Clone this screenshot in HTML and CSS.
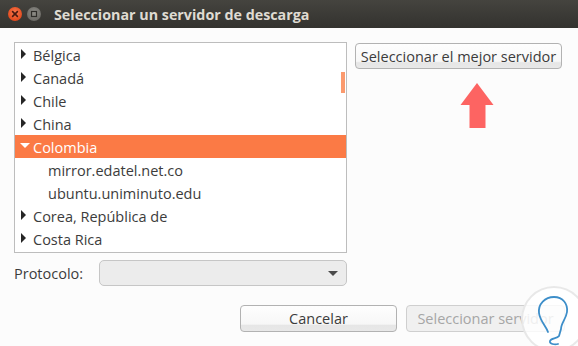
FILE: index.html
```html
<!DOCTYPE html>
<html>
<head>
<meta charset="utf-8">
<link rel="stylesheet" href="styles.css">
</head>
<body>
<div class="window">
  <div class="titlebar">
    <span class="wbtn close"><svg width="14" height="14" viewBox="0 0 14 14"><path d="M4.6 4.6L9.4 9.4M9.4 4.6L4.6 9.4" stroke="#4a1a10" stroke-width="1.6" stroke-linecap="round"/></svg></span>
    <span class="wbtn max"><svg width="14" height="14" viewBox="0 0 14 14"><rect x="4.5" y="4.5" width="5" height="5" fill="none" stroke="#2e2d29" stroke-width="1.2"/></svg></span>
    <span class="title">Seleccionar un servidor de descarga</span>
  </div>
  <div class="content">
    <div class="top-row">
      <div class="tree">
        <div class="row"><span class="exp right"></span>Bélgica</div>
        <div class="row"><span class="exp right"></span>Canadá</div>
        <div class="row"><span class="exp right"></span>Chile</div>
        <div class="row"><span class="exp right"></span>China</div>
        <div class="row selected"><span class="exp down"></span>Colombia</div>
        <div class="row child">mirror.edatel.net.co</div>
        <div class="row child">ubuntu.uniminuto.edu</div>
        <div class="row"><span class="exp right"></span>Corea, República de</div>
        <div class="row"><span class="exp right"></span>Costa Rica</div>
        <div class="scrollbar"></div>
      </div>
      <div class="side">
        <button class="btn best">Seleccionar el mejor servidor</button>
        <svg class="arrow" width="34" height="46" viewBox="0 0 34 46"><path d="M17 0L33.5 22H25.5V45H9.5V22H0.5Z" fill="#fd6462"/></svg>
      </div>
    </div>
    <div class="proto-row">
      <span class="label">Protocolo:</span>
      <div class="combo"><span class="caret"></span></div>
    </div>
    <div class="actions">
      <button class="btn cancel">Cancelar</button>
      <button class="btn disabled">Seleccionar servidor</button>
    </div>
  </div>
  <div class="watermark">
    <svg width="66" height="66" viewBox="0 0 66 66"><path d="M27 46C25 40 19 35 18 27C17 18 24 11 33 11C42 11 47 18 46 26C45 33 40 37 40 43L38 50C36 53 30 52 29 55C28 58 34 59 37 58" fill="none" stroke="#3d8ec9" stroke-width="1.8" stroke-linecap="round" stroke-linejoin="round"/></svg>
  </div>
</div>
</body>
</html>
```
FILE: styles.css
```css
html, body {
  margin: 0;
  padding: 0;
}
body {
  width: 578px;
  height: 346px;
  overflow: hidden;
  font-family: "Open Sans", "Noto Sans", sans-serif;
  font-size: 14.5px;
  color: #3c3c3c;
}
.window {
  position: relative;
  width: 578px;
  height: 346px;
  background: #fcfcfc;
}
.titlebar {
  height: 28px;
  background: linear-gradient(#45443f, #3a3935 60%, #34332f);
  display: flex;
  align-items: center;
  padding-left: 8px;
  gap: 5px;
  box-sizing: border-box;
}
.wbtn {
  width: 14px;
  height: 14px;
  border-radius: 50%;
  display: flex;
}
.close {
  background: radial-gradient(circle at 50% 40%, #f8794e, #e44b1e 70%, #c93c14);
}
.max {
  background: radial-gradient(circle at 50% 40%, #8f8e88, #6d6c67 70%, #5a5955);
}
.title {
  margin-left: 8px;
  color: #dfdbd2;
  font-weight: bold;
  font-size: 14.3px;
}
.content {
  padding: 14px 13px 0 14px;
}
.top-row {
  display: flex;
  align-items: flex-start;
  gap: 8px;
}
.tree {
  position: relative;
  width: 333px;
  height: 211px;
  box-sizing: border-box;
  border: 1px solid #bdbdbd;
  background: #ffffff;
}
.row {
  height: 23px;
  line-height: 23px;
  display: flex;
  align-items: center;
  padding-left: 6px;
  padding-top: 1px;
  box-sizing: border-box;
  white-space: nowrap;
}
.row.selected {
  background: #fb7a45;
  color: #ffffff;
}
.row.child {
  padding-left: 33px;
}
.exp {
  width: 6px;
  height: 10px;
  margin-right: 6px;
  position: relative;
}
.exp.right::before {
  content: "";
  position: absolute;
  left: 0;
  top: -1px;
  border-left: 5px solid #262626;
  border-top: 5px solid transparent;
  border-bottom: 5px solid transparent;
}
.exp.down::before {
  content: "";
  position: absolute;
  left: -1px;
  top: 1px;
  border-top: 5px solid #ffffff;
  border-left: 5px solid transparent;
  border-right: 5px solid transparent;
}
.scrollbar {
  position: absolute;
  right: 1px;
  top: 29px;
  width: 4px;
  height: 21px;
  background: #fb9a6e;
}
.side {
  display: flex;
  flex-direction: column;
  align-items: center;
  padding-top: 1px;
}
.btn {
  font-family: inherit;
  font-size: 14.5px;
  color: #3c3c3c;
  border: 1px solid #b2b2b2;
  border-radius: 4px;
  background: linear-gradient(#fefefe, #f7f7f7 72%, #e6e6e6 78%, #e8e8e8);
  padding: 0;
  box-sizing: border-box;
  white-space: nowrap;
}
.best {
  width: 207px;
  height: 26px;
}
.arrow {
  margin-top: 14px;
  margin-left: 36px;
}
.proto-row {
  display: flex;
  align-items: center;
  margin-top: 7px;
}
.label {
  width: 85px;
  color: #3c3c3c;
}
.combo {
  position: relative;
  width: 248px;
  height: 26px;
  box-sizing: border-box;
  border: 1px solid #c6c6c6;
  border-radius: 5px;
  background: #ececec;
}
.caret {
  position: absolute;
  right: 8px;
  top: 10px;
  border-top: 5px solid #4a4a4a;
  border-left: 5px solid transparent;
  border-right: 5px solid transparent;
}
.actions {
  display: flex;
  justify-content: flex-end;
  gap: 9px;
  margin-top: 19px;
}
.cancel {
  width: 157px;
  height: 27px;
}
.disabled {
  width: 159px;
  height: 27px;
  color: #a6a6a6;
  border-color: #cfcfcf;
  background: #f0f0f0;
}
.watermark {
  position: absolute;
  left: 521px;
  top: 286px;
  width: 66px;
  height: 66px;
  border-radius: 50%;
  background: rgba(255, 255, 255, 0.82);
  border: 2px solid rgba(230, 230, 230, 0.9);
  box-sizing: border-box;
}
.watermark svg {
  position: absolute;
  left: -2px;
  top: -2px;
}
```
